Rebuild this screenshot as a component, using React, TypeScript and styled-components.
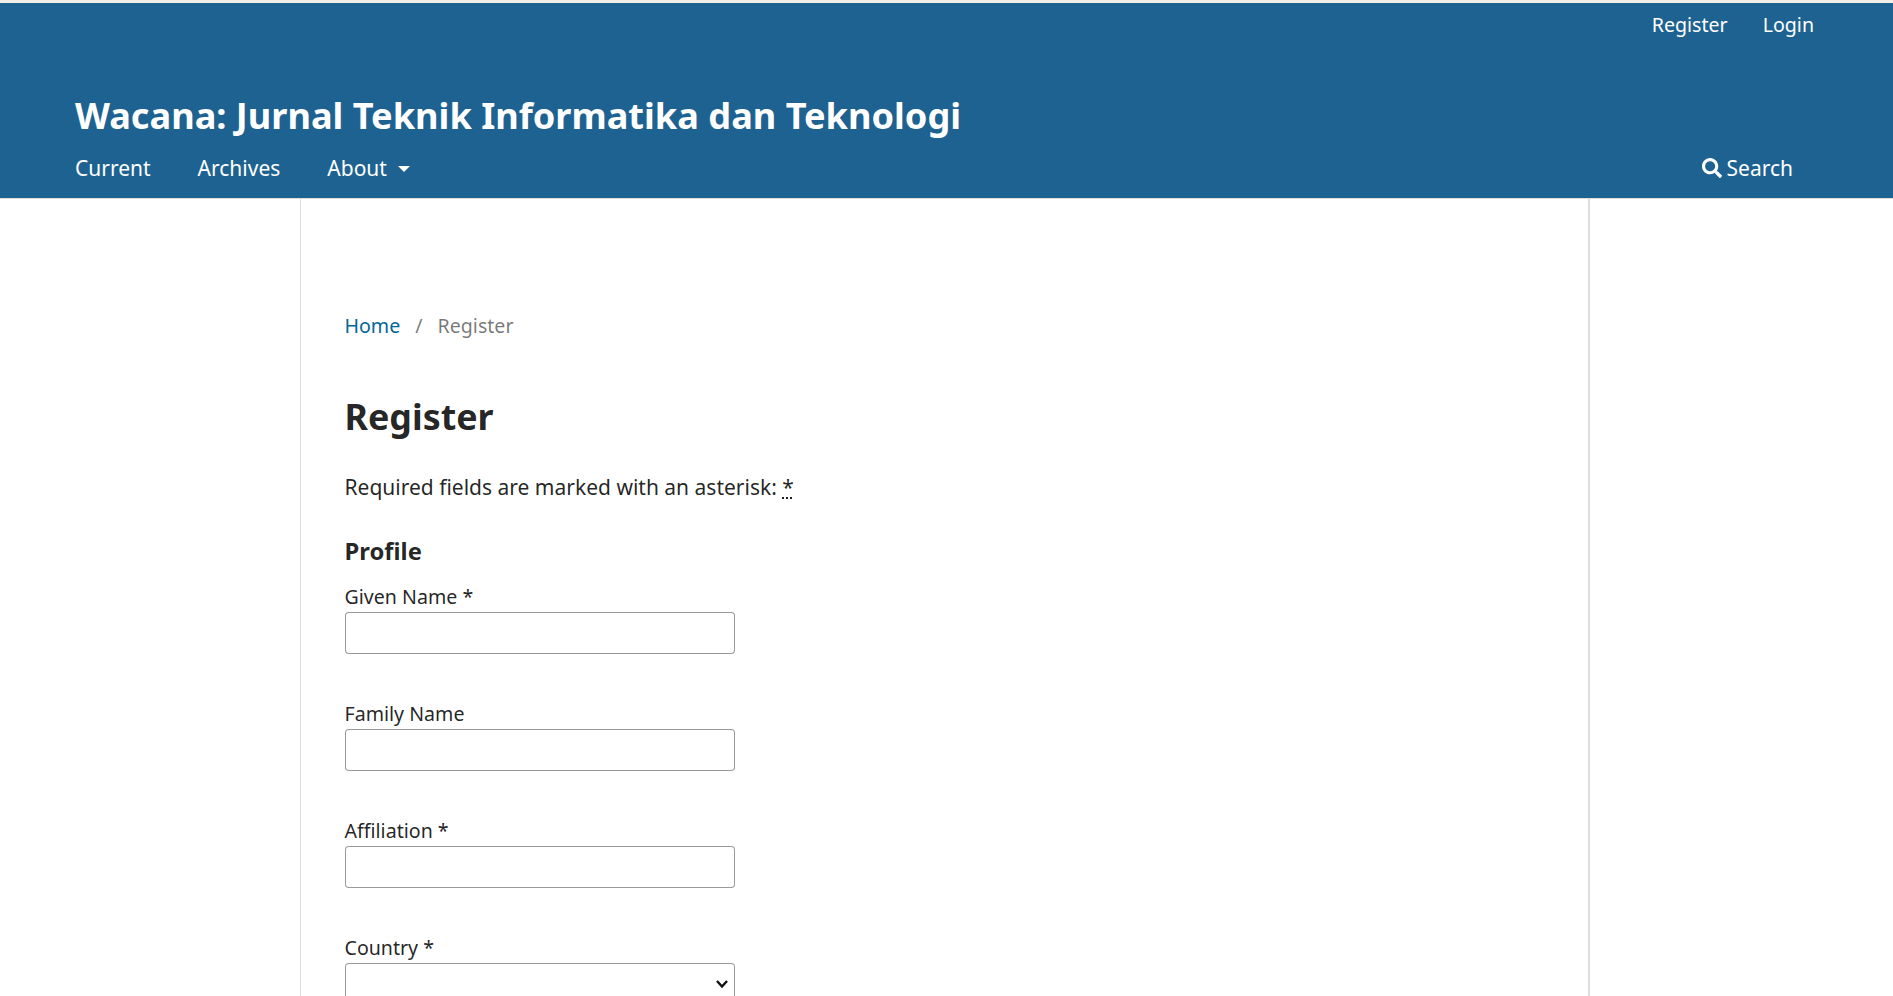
import React from "react";
import styled, { createGlobalStyle } from "styled-components";
import { FaSearch } from "react-icons/fa";

const GlobalStyle = createGlobalStyle`
  html, body {
    margin: 0;
    height: 100%;
    overflow: hidden;
    background: #fff;
    font-family: "Noto Sans", sans-serif;
    color: rgba(0, 0, 0, 0.87);
  }
`;

const TopStrip = styled.div`
  height: 3px;
  background: #f3efe6;
`;

const Header = styled.header`
  background-color: #1e6292;
  color: #fff;
  height: 195px;
  padding: 0 75px;
  display: flex;
  flex-direction: column;
  border-bottom: 1px solid #ddd;
`;

const UserNav = styled.nav`
  display: flex;
  justify-content: flex-end;
  gap: 35px;
  height: 42px;
  padding-right: 4px;
  align-items: center;
  font-size: 19.6px;
`;

const SiteName = styled.h1`
  margin: 47px 0 0;
  font-size: 36.15px;
  line-height: 46px;
  font-weight: 700;
`;

const PrimaryNav = styled.nav`
  display: flex;
  align-items: center;
  margin-top: 15px;
  font-size: 21px;
  line-height: 30px;
`;

const NavItem = styled.a`
  color: #fff;
  margin-right: 47px;
  display: flex;
  align-items: center;
`;

const Caret = styled.span`
  display: inline-block;
  margin-left: 11px;
  margin-top: 2px;
  border-top: 6px solid #fff;
  border-left: 6px solid transparent;
  border-right: 6px solid transparent;
`;

const SearchLink = styled.a`
  margin-left: auto;
  margin-right: 25px;
  display: flex;
  align-items: center;
  gap: 5px;
  color: #fff;
`;

const Page = styled.div`
  width: 1290px;
  margin-left: 300px;
  box-sizing: border-box;
  border-left: 1px solid #ddd;
  border-right: 2px solid #ddd;
  padding: 114px 44px 0 43.5px;
  height: 800px;
`;

const Breadcrumb = styled.div`
  display: flex;
  gap: 15px;
  font-size: 19.6px;
  line-height: 26px;
  color: rgba(0, 0, 0, 0.54);
`;

const Crumb = styled.a`
  color: #006798;
`;

const Title = styled.h2`
  margin: 54px 0 0;
  font-size: 35.8px;
  line-height: 46px;
  font-weight: 700;
`;

const Required = styled.p`
  margin: 33px 0 0;
  font-size: 21px;
  line-height: 30px;
`;

const Asterisk = styled.abbr`
  text-decoration: underline dotted;
`;

const SectionTitle = styled.h3`
  margin: 33px 0 0;
  font-size: 23.8px;
  line-height: 32px;
  font-weight: 700;
`;

const Field = styled.div<{ $first?: boolean }>`
  margin-top: ${(p) => (p.$first ? "15px" : "45px")};
`;

const Label = styled.label`
  display: block;
  font-size: 19.6px;
  line-height: 30px;
  height: 30px;
`;

const TextInput = styled.input`
  display: block;
  width: 390px;
  height: 42px;
  box-sizing: border-box;
  background: #fff;
  border: 1px solid rgba(0, 0, 0, 0.4);
  border-radius: 4px;
  padding: 0 6px;
`;

const SelectWrap = styled.div`
  position: relative;
  width: 390px;
  height: 42px;
`;

const SelectInput = styled.select`
  display: block;
  width: 100%;
  height: 100%;
  box-sizing: border-box;
  appearance: none;
  background: #fff;
  border: 1px solid rgba(0, 0, 0, 0.4);
  border-radius: 4px;
  font-size: 19.6px;
  font-family: "Noto Sans", sans-serif;
`;

const SelectArrow = styled.svg`
  position: absolute;
  right: 6px;
  top: 16px;
  width: 14px;
  height: 10px;
  pointer-events: none;
`;

const App = () => (
  <>
    <GlobalStyle />
    <TopStrip />
    <Header>
      <UserNav>
        <span>Register</span>
        <span>Login</span>
      </UserNav>
      <SiteName>Wacana: Jurnal Teknik Informatika dan Teknologi</SiteName>
      <PrimaryNav>
        <NavItem>Current</NavItem>
        <NavItem>Archives</NavItem>
        <NavItem>
          About
          <Caret />
        </NavItem>
        <SearchLink>
          <FaSearch size={20} />
          Search
        </SearchLink>
      </PrimaryNav>
    </Header>
    <Page>
      <Breadcrumb>
        <Crumb>Home</Crumb>
        <span>/</span>
        <span>Register</span>
      </Breadcrumb>
      <Title>Register</Title>
      <Required>
        Required fields are marked with an asterisk: <Asterisk>*</Asterisk>
      </Required>
      <SectionTitle>Profile</SectionTitle>
      <Field $first>
        <Label>Given Name *</Label>
        <TextInput />
      </Field>
      <Field>
        <Label>Family Name</Label>
        <TextInput />
      </Field>
      <Field>
        <Label>Affiliation *</Label>
        <TextInput />
      </Field>
      <Field>
        <Label>Country *</Label>
        <SelectWrap>
          <SelectInput />
          <SelectArrow viewBox="0 0 14 10">
            <path d="M2 2 L7 7.5 L12 2" fill="none" stroke="#111" strokeWidth="2.4" />
          </SelectArrow>
        </SelectWrap>
      </Field>
    </Page>
  </>
);

export default App;
